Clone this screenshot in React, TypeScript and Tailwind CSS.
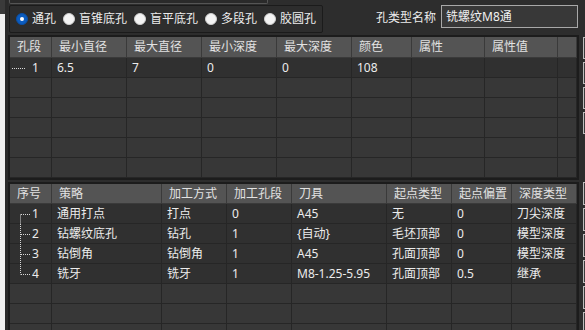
import React from "react";

const font = { fontFamily: '"Segoe UI", "Noto Sans", "Noto Sans CJK SC", sans-serif' };

function Radio({ checked, label }: { checked?: boolean; label: string }) {
  return (
    <div className="flex items-center">
      {checked ? (
        <div className="w-[12px] h-[12px] rounded-full bg-[#0b5cc0] border border-[#0a4fa6] flex items-center justify-center">
          <div className="w-[4px] h-[4px] rounded-full bg-white" />
        </div>
      ) : (
        <div className="w-[12px] h-[12px] rounded-full bg-[#f4f4f4] border border-[#cfcfcf]" />
      )}
      <span className="ml-[4px] text-[12px] leading-[16px] text-[#ececec]">{label}</span>
    </div>
  );
}

function TreeMark({ kind }: { kind: "single" | "first" | "mid" | "last" }) {
  if (kind === "single") {
    return (
      <svg width="20" height="20" className="absolute left-0 top-0">
        <line x1="2" y1="10.5" x2="15" y2="10.5" stroke="#d8d8d8" strokeWidth="1" strokeDasharray="1 1" />
      </svg>
    );
  }
  const y1 = kind === "first" ? 10.5 : 0;
  const y2 = kind === "last" ? 10.5 : 20;
  return (
    <svg width="22" height="20" className="absolute left-0 top-0">
      <line x1="10.5" y1={y1} x2="10.5" y2={y2} stroke="#d8d8d8" strokeWidth="1" strokeDasharray="1 1" />
      <line x1="11" y1="10.5" x2="20" y2="10.5" stroke="#d8d8d8" strokeWidth="1" strokeDasharray="1 1" />
    </svg>
  );
}

const h1 = ["孔段", "最小直径", "最大直径", "最小深度", "最大深度", "颜色", "属性", "属性值", ""];
const r1 = ["1", "6.5", "7", "0", "0", "108", "", "", ""];

const h2 = ["序号", "策略", "加工方式", "加工孔段", "刀具", "起点类型", "起点偏置", "深度类型"];
const r2 = [
  ["1", "通用打点", "打点", "0", "A45", "无", "0", "刀尖深度"],
  ["2", "钻螺纹底孔", "钻孔", "1", "{自动}", "毛坯顶部", "0", "模型深度"],
  ["3", "钻倒角", "钻倒角", "1", "A45", "孔面顶部", "0", "模型深度"],
  ["4", "铣牙", "铣牙", "1", "M8-1.25-5.95", "孔面顶部", "0.5", "继承"],
];
const kinds: ("first" | "mid" | "last")[] = ["first", "mid", "mid", "last"];

function HeaderCell({ text }: { text: string }) {
  return (
    <div className="bg-[#545454] border-r border-b border-[#3a3a3a] pl-[7px] flex items-center text-[12px] text-[#e2e2e2] whitespace-nowrap overflow-hidden">
      {text}
    </div>
  );
}

function Cell({ text, dark }: { text: string; dark?: boolean }) {
  return (
    <div
      className={
        (dark ? "bg-[#303030] " : "bg-[#373737] ") +
        "h-[20px] border-r border-b border-[#262626] pl-[5px] flex items-center text-[12px] text-[#ececec] whitespace-nowrap overflow-hidden"
      }
    >
      {text}
    </div>
  );
}

function TreeCell({ n, kind, dark }: { n: string; kind: "single" | "first" | "mid" | "last"; dark?: boolean }) {
  return (
    <div
      className={
        (dark ? "bg-[#303030] " : "bg-[#373737] ") +
        "relative h-[20px] border-r border-b border-[#262626] flex items-center text-[12px] text-[#ececec]"
      }
    >
      <TreeMark kind={kind} />
      <span className="ml-[22px]">{n}</span>
    </div>
  );
}

export default function App() {
  return (
    <div className="w-[585px] h-[330px] overflow-hidden flex bg-[#2d2d2d]" style={font}>
      <div className="w-[5px] flex flex-col">
        <div className="h-[14px] bg-[#3a3a3a]" />
        <div className="flex-1 bg-[#f0f0f0]" />
      </div>
      <div className="w-[3px] bg-[#2a2a2a]" />
      <div className="w-[571px] flex flex-col">
        <div className="h-[4px] w-[259px] ml-px border-x border-b border-[#555555] rounded-b-[2px] bg-[#2a2a2a]" />
        <div className="mt-px h-[28px] flex items-start">
          <div className="ml-px h-[28px] w-[314px] border border-[#1b1b1b] rounded-[2px] flex items-center pl-[6px] gap-[7px]">
            <Radio checked label="通孔" />
            <Radio label="盲锥底孔" />
            <Radio label="盲平底孔" />
            <Radio label="多段孔" />
            <Radio label="胶圆孔" />
          </div>
          <div className="flex-1" />
          <span className="self-center text-[12px] text-[#ececec] mb-[2px]">孔类型名称</span>
          <div className="ml-[5px] mr-px w-[137px] h-[23px] border border-[#a8a8a8] bg-[#383838] flex items-center pl-[4px] text-[12px] text-[#f0f0f0]">
            铣螺纹M8通
          </div>
        </div>
        <div className="mt-[2px] h-[145px] border-2 border-[#1c1c1c] bg-[#373737] overflow-hidden">
          <div className="grid grid-cols-[42px_75px_75px_75px_75px_60px_73px_73px_19px] grid-rows-[21px] auto-rows-[20px]">
            {h1.map((h, i) => (
              <HeaderCell key={"h" + i} text={h} />
            ))}
            {r1.map((c, i) =>
              i === 0 ? <TreeCell key={"r" + i} n={c} kind="single" dark /> : <Cell key={"r" + i} text={c} dark />
            )}
            {Array.from({ length: 5 }).map((_, r) =>
              h1.map((_, i) => <Cell key={"e" + r + "-" + i} text="" />)
            )}
          </div>
        </div>
        <div className="mt-[2px] flex-1 border-2 border-b-0 border-[#1c1c1c] bg-[#373737] overflow-hidden">
          <div className="grid grid-cols-[42px_110px_65px_65px_95px_65px_60px_65px] grid-rows-[20px] auto-rows-[20px]">
            {h2.map((h, i) => (
              <HeaderCell key={"h" + i} text={h} />
            ))}
            {r2.map((row, r) =>
              row.map((c, i) =>
                i === 0 ? (
                  <TreeCell key={"d" + r + "-" + i} n={c} kind={kinds[r]} dark />
                ) : (
                  <Cell key={"d" + r + "-" + i} text={c} dark />
                )
              )
            )}
            {Array.from({ length: 3 }).map((_, r) =>
              h2.map((_, i) => <Cell key={"e" + r + "-" + i} text="" />)
            )}
          </div>
        </div>
      </div>
      <div className="w-[6px] overflow-hidden flex flex-col">
        <div className="mt-[37px] flex flex-col gap-[3px]">
          {[0, 1, 2, 3].map((i) => (
            <div key={i} className="ml-[4px] w-[20px] h-[22px] border border-[#bdbdbd] bg-[#3a3a3a]" />
          ))}
        </div>
        <div className="mt-[48px] flex flex-col gap-[3px]">
          {[0, 1, 2, 3, 4, 5].map((i) => (
            <div key={i} className="ml-[4px] w-[20px] h-[23px] border border-[#bdbdbd] bg-[#3a3a3a]" />
          ))}
        </div>
      </div>
    </div>
  );
}
